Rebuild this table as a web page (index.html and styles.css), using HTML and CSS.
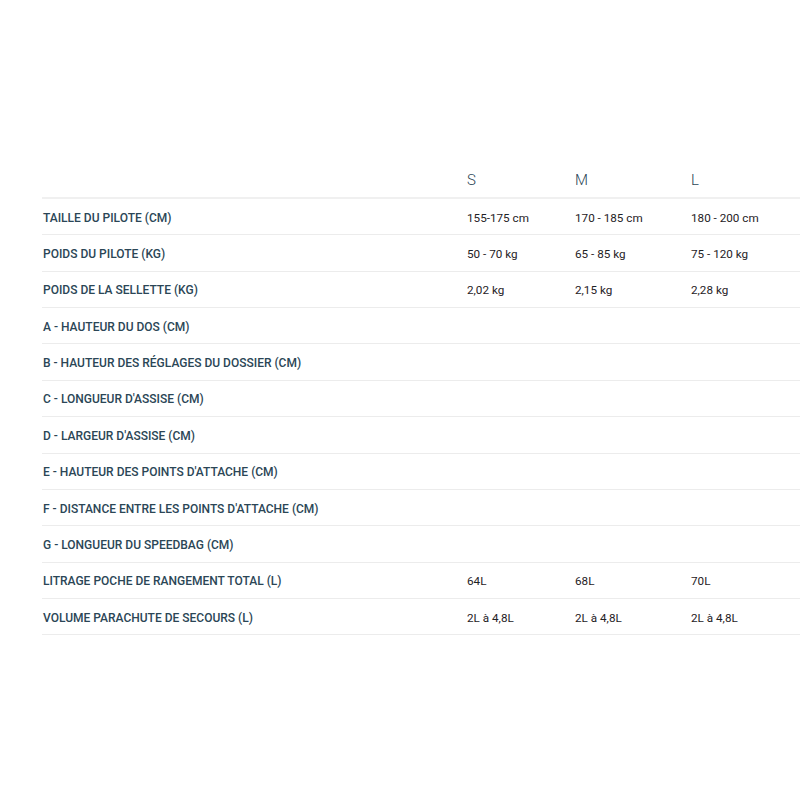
FILE: index.html
```html
<!DOCTYPE html>
<html lang="fr">
<head>
<meta charset="utf-8">
<title>Tailles</title>
<link rel="stylesheet" href="styles.css">
</head>
<body>
<div class="sizes">
  <div class="row head">
    <div class="label"></div>
    <div class="size">S</div>
    <div class="size">M</div>
    <div class="size">L</div>
  </div>
  <div class="row"><div class="label">TAILLE DU PILOTE (CM)</div><div class="val">155-175 cm</div><div class="val">170 - 185 cm</div><div class="val">180 - 200 cm</div></div>
  <div class="row"><div class="label">POIDS DU PILOTE (KG)</div><div class="val">50 - 70 kg</div><div class="val">65 - 85 kg</div><div class="val">75 - 120 kg</div></div>
  <div class="row"><div class="label">POIDS DE LA SELLETTE (KG)</div><div class="val">2,02 kg</div><div class="val">2,15 kg</div><div class="val">2,28 kg</div></div>
  <div class="row"><div class="label">A - HAUTEUR DU DOS (CM)</div><div class="val"></div><div class="val"></div><div class="val"></div></div>
  <div class="row"><div class="label">B - HAUTEUR DES RÉGLAGES DU DOSSIER (CM)</div><div class="val"></div><div class="val"></div><div class="val"></div></div>
  <div class="row"><div class="label">C - LONGUEUR D'ASSISE (CM)</div><div class="val"></div><div class="val"></div><div class="val"></div></div>
  <div class="row"><div class="label">D - LARGEUR D'ASSISE (CM)</div><div class="val"></div><div class="val"></div><div class="val"></div></div>
  <div class="row"><div class="label">E - HAUTEUR DES POINTS D'ATTACHE (CM)</div><div class="val"></div><div class="val"></div><div class="val"></div></div>
  <div class="row"><div class="label">F - DISTANCE ENTRE LES POINTS D'ATTACHE (CM)</div><div class="val"></div><div class="val"></div><div class="val"></div></div>
  <div class="row"><div class="label">G - LONGUEUR DU SPEEDBAG (CM)</div><div class="val"></div><div class="val"></div><div class="val"></div></div>
  <div class="row"><div class="label">LITRAGE POCHE DE RANGEMENT TOTAL (L)</div><div class="val">64L</div><div class="val">68L</div><div class="val">70L</div></div>
  <div class="row"><div class="label">VOLUME PARACHUTE DE SECOURS (L)</div><div class="val">2L à 4,8L</div><div class="val">2L à 4,8L</div><div class="val">2L à 4,8L</div></div>
</div>
</body>
</html>
```

FILE: styles.css
```css
html, body {
  margin: 0;
  padding: 0;
  background: #ffffff;
}
body {
  font-family: Roboto, "Liberation Sans", sans-serif;
  overflow: hidden;
}
.sizes {
  padding-top: 161px;
  padding-left: 42px;
}
.row {
  display: grid;
  grid-template-columns: 425px 108px 116px 1fr;
  align-items: center;
  height: 36.36px;
  box-sizing: border-box;
  border-bottom: 1px solid #ececec;
  padding-top: 2px;
}
.row.head {
  height: 38px;
  padding-top: 1px;
  border-bottom: 2px solid #f0f0f0;
}
.label {
  padding-left: 1px;
  font-size: 12px;
  font-weight: 500;
  color: #2b4656;
}
.size {
  font-size: 15px;
  font-weight: 300;
  color: #2b4656;
}
.val {
  font-size: 11.7px;
  color: #1f2226;
}
```
